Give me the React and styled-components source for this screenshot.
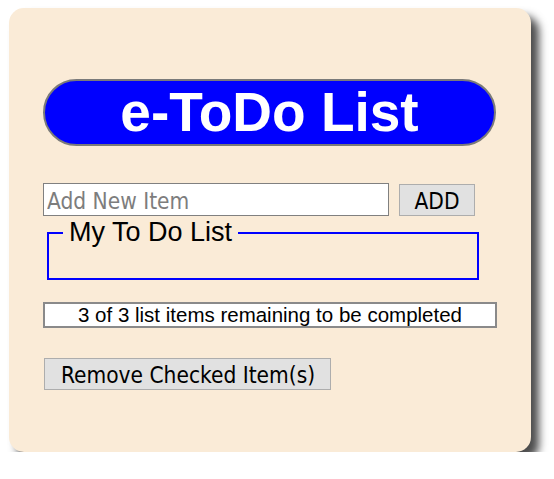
import React from "react";
import styled, { createGlobalStyle } from "styled-components";

const Global = createGlobalStyle`
  html, body { margin: 0; padding: 0; background: #ffffff; }
  body { font-family: "Liberation Sans", Arial, sans-serif; }
`;

const Page = styled.div`
  padding: 8px 0 0 9px;
`;

const Panel = styled.div`
  box-sizing: border-box;
  width: 522px;
  height: 444px;
  background: #faebd7;
  border-radius: 15px;
  box-shadow: 8px 8px 9px rgba(0, 0, 0, 0.7);
  padding: 71px 0 0 34px;
  display: flex;
  flex-direction: column;
`;

const TitlePill = styled.h1`
  box-sizing: border-box;
  margin: 0;
  width: 453px;
  height: 67px;
  border-radius: 34px;
  background: #0000ff;
  border: 2px solid #7a7a7a;
  color: #ffffff;
  font-family: "Liberation Sans", Arial, sans-serif;
  font-weight: bold;
  font-size: 55px;
  line-height: 62px;
  text-align: center;
`;

const AddRow = styled.div`
  display: flex;
  align-items: flex-start;
  gap: 10px;
  margin-top: 37px;
`;

const tahoma = `"DejaVu Sans Condensed", "DejaVu Sans", Tahoma, sans-serif`;

const TextInput = styled.input`
  box-sizing: border-box;
  width: 346px;
  height: 33px;
  margin: 0;
  border: 1px solid #808080;
  background: #ffffff;
  padding: 2px 3px 0;
  font-family: ${tahoma};
  font-size: 22.5px;
  outline: none;
  &::placeholder { color: #7d7d7d; }
`;

const GrayButton = styled.button`
  box-sizing: border-box;
  margin: ${(p) => p.$mt || "0"} 0 0 ${(p) => p.$ml || "0"};
  width: ${(p) => p.$w};
  height: 32px;
  background: #e1e1e1;
  border: 1px solid #adadad;
  border-radius: 0;
  color: #000;
  font-family: ${tahoma};
  font-size: 22.5px;
  padding: 1px 0 0 ${(p) => p.$pl || "0"};
  text-align: ${(p) => p.$align || "center"};
  cursor: pointer;
`;

const ListBox = styled.fieldset`
  box-sizing: border-box;
  width: 432px;
  height: 61px;
  margin: 3px 0 0 4px;
  padding: 0 0 0 14px;
  border: 2px solid #0000ff;
`;

const ListLegend = styled.legend`
  padding: 0 6px;
  font-family: "Liberation Sans", Arial, sans-serif;
  font-size: 27px;
  line-height: 27px;
  color: #000;
`;

const StatusBox = styled.div`
  box-sizing: border-box;
  width: 454px;
  height: 26px;
  margin-top: 22px;
  background: #ffffff;
  border: 2px solid #8a8a8a;
  font-family: "Liberation Sans", Arial, sans-serif;
  font-size: 20.5px;
  line-height: 22px;
  text-align: center;
  color: #000;
`;

export default function App() {
  return (
    <>
      <Global />
      <Page>
        <Panel>
          <TitlePill>e-ToDo List</TitlePill>
          <AddRow>
            <TextInput placeholder="Add New Item" />
            <GrayButton $w="76px" $mt="1px">ADD</GrayButton>
          </AddRow>
          <ListBox>
            <ListLegend>My To Do List</ListLegend>
          </ListBox>
          <StatusBox>3 of 3 list items remaining to be completed</StatusBox>
          <GrayButton $w="287px" $mt="30px" $ml="1px" $align="left" $pl="16px">
            Remove Checked Item(s)
          </GrayButton>
        </Panel>
      </Page>
    </>
  );
}
